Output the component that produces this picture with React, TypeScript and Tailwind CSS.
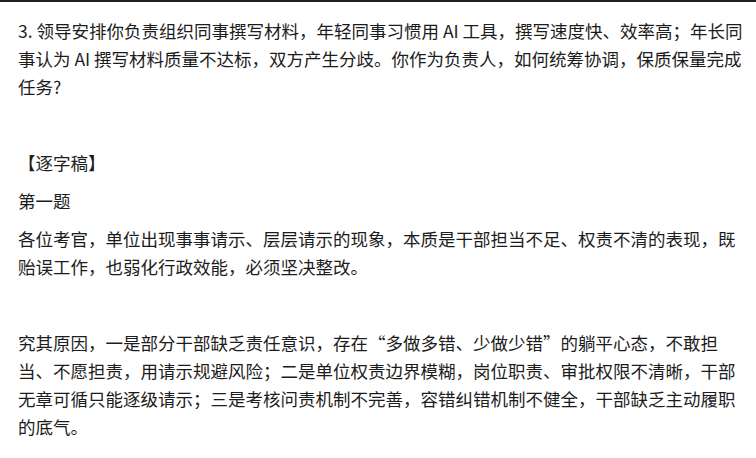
export default function App() {
  const paras = [
    "3. 领导安排你负责组织同事撰写材料，年轻同事习惯用 AI 工具，撰写速度快、效率高；年长同事认为 AI 撰写材料质量不达标，双方产生分歧。你作为负责人，如何统筹协调，保质保量完成任务?",
    "",
    "【逐字稿】",
    "第一题",
    "各位考官，单位出现事事请示、层层请示的现象，本质是干部担当不足、权责不清的表现，既贻误工作，也弱化行政效能，必须坚决整改。",
    "",
    "究其原因，一是部分干部缺乏责任意识，存在“多做多错、少做少错”的躺平心态，不敢担当、不愿担责，用请示规避风险；二是单位权责边界模糊，岗位职责、审批权限不清晰，干部无章可循只能逐级请示；三是考核问责机制不完善，容错纠错机制不健全，干部缺乏主动履职的底气。",
  ];

  return (
    <div className="h-[458px] overflow-hidden bg-white border-t-2 border-[#222]">
      <div
        className="pl-[18px] pr-[8px] pt-[15px] text-[17.5px] leading-[28px] text-[#1c1c1c]"
        style={{ fontFamily: '"Noto Sans CJK SC", "Noto Sans", sans-serif' }}
      >
        {paras.map((p, i) => (
          <p key={i} className="mb-[10px] min-h-[28px]">
            {p}
          </p>
        ))}
      </div>
    </div>
  );
}
